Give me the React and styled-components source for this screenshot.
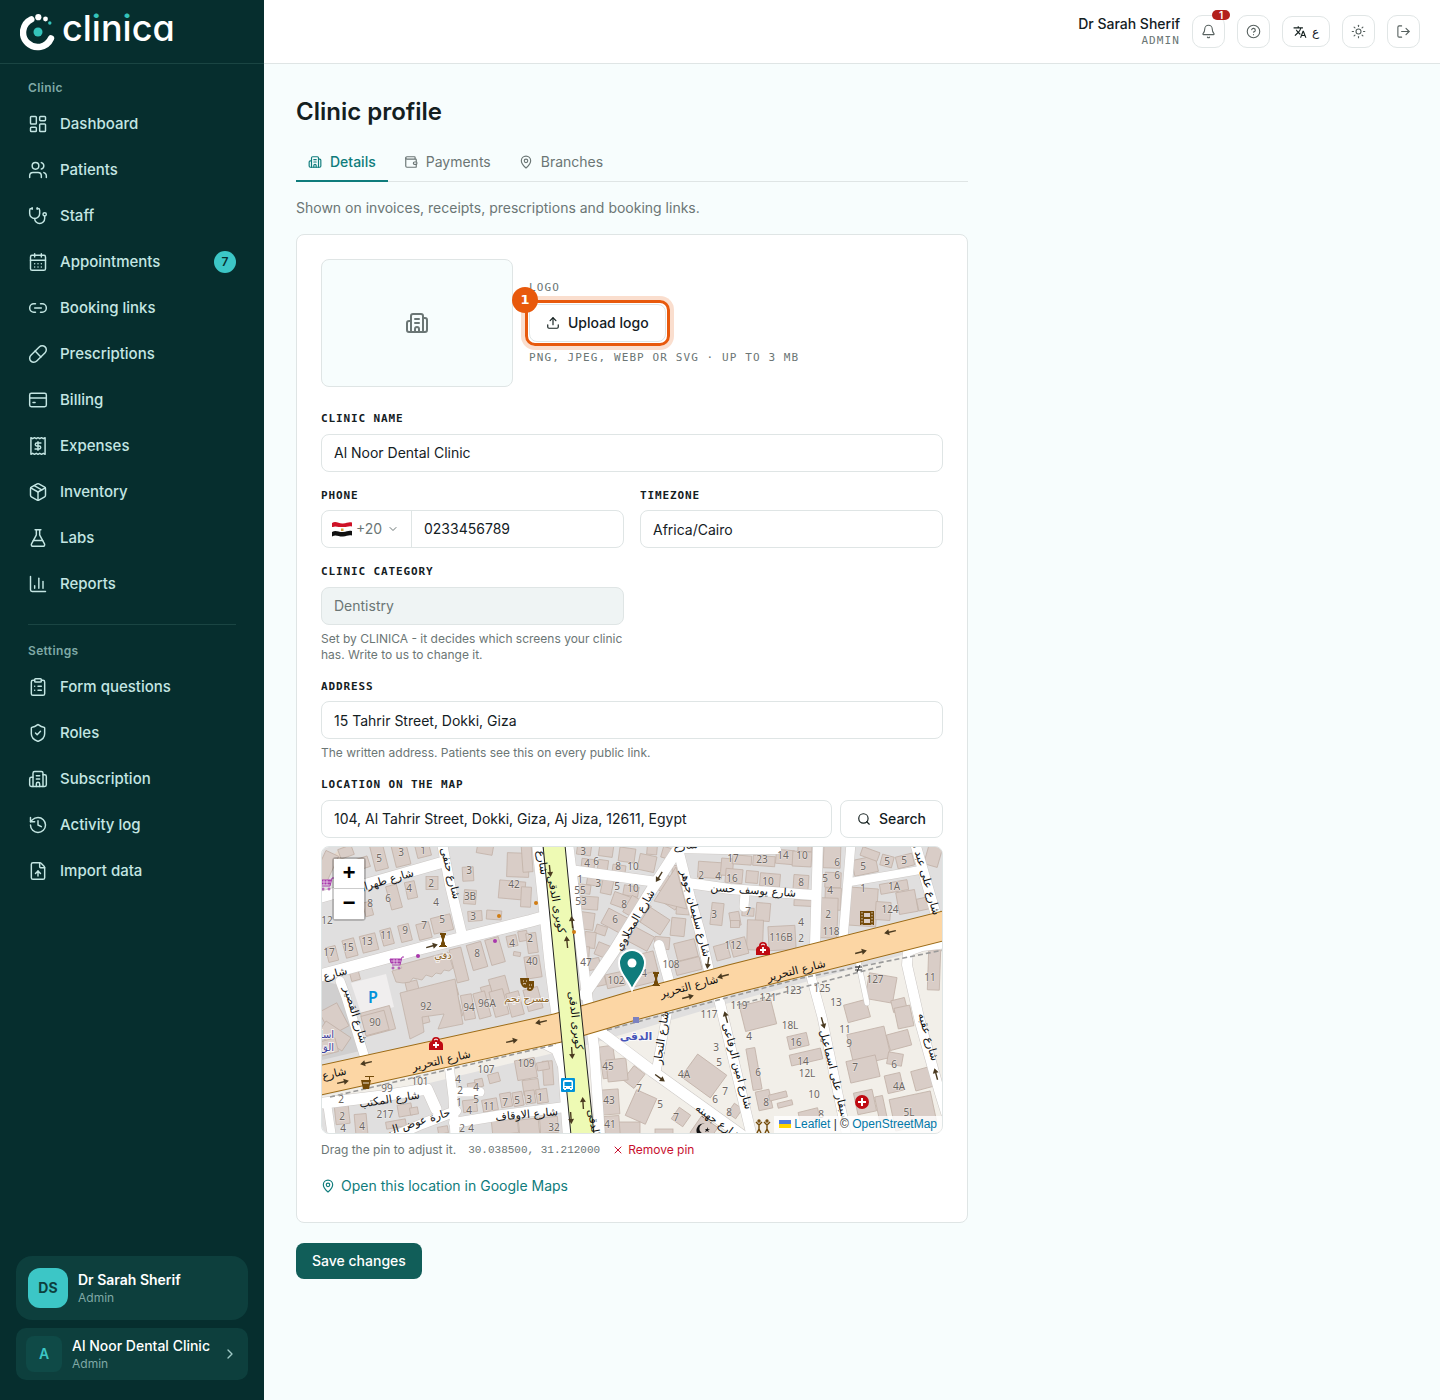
import { useState } from 'react'
import styled, { createGlobalStyle, css } from 'styled-components'
import {
    LayoutDashboard, Users, Stethoscope, CalendarDays, Link2, Pill, Package, FlaskConical,
    ChartColumn, ClipboardList, ShieldCheck, Building2, History, FileUp, Bell,
    CircleQuestionMark, Sun, LogOut, Wallet, MapPin, Upload, Search, ChevronDown, ChevronRight, X
} from 'lucide-react'
import { MdTranslate } from 'react-icons/md'

const Stroke = ({ size = 20, children }) => (
    <svg width={size} height={size} viewBox="0 0 24 24" fill="none" stroke="currentColor" strokeWidth="1.75" strokeLinecap="round" strokeLinejoin="round" aria-hidden="true">
        {children}
    </svg>
)

const CardIcon = () => (
    <Stroke>
        <rect x="2" y="4" width="20" height="16" rx="2" />
        <path d="M2 9.5h20M6 15h2.5" />
    </Stroke>
)

const ReceiptIcon = () => (
    <Stroke>
        <path d="M3.5 2v20l2.1-1.2L7.8 22l2.1-1.2L12 22l2.1-1.2 2.1 1.2 2.2-1.2 2.1 1.2V2l-2.1 1.2L16.2 2l-2.1 1.2L12 2 9.9 3.2 7.8 2 5.6 3.2z" />
        <path d="M15.5 8.5h-5a1.75 1.75 0 0 0 0 3.5h3a1.75 1.75 0 0 1 0 3.5h-5M12 6.8v10.4" />
    </Stroke>
)

const clinicLinks = [
    { label: 'Dashboard', icon: LayoutDashboard },
    { label: 'Patients', icon: Users },
    { label: 'Staff', icon: Stethoscope },
    { label: 'Appointments', icon: CalendarDays, count: 7 },
    { label: 'Booking links', icon: Link2 },
    { label: 'Prescriptions', icon: Pill },
    { label: 'Billing', icon: CardIcon },
    { label: 'Expenses', icon: ReceiptIcon },
    { label: 'Inventory', icon: Package },
    { label: 'Labs', icon: FlaskConical },
    { label: 'Reports', icon: ChartColumn }
]

const settingsLinks = [
    { label: 'Form questions', icon: ClipboardList },
    { label: 'Roles', icon: ShieldCheck },
    { label: 'Subscription', icon: Building2 },
    { label: 'Activity log', icon: History },
    { label: 'Import data', icon: FileUp }
]

const Logo = () => (
    <svg width="160" height="60" viewBox="0 -10 160 60" role="img" aria-label="clinica">
        <defs>
            <linearGradient id="dotted" gradientUnits="userSpaceOnUse" x1="0" y1="0" x2="0" y2="40">
                <stop offset="0.2" stopColor="#35c4bb" />
                <stop offset="0.2" stopColor="#fff" />
            </linearGradient>
        </defs>
        <path d="M11.3 7.3A14.6 14.6 0 1 0 31 26.4" fill="none" stroke="#fff" strokeWidth="6.4" strokeLinecap="round" />
        <circle cx="18" cy="20" r="4.5" fill="#35c4bb" />
        <circle cx="18.3" cy="5.2" r="3.1" fill="#fff" />
        <circle cx="25.5" cy="7" r="2.4" fill="#fff" />
        <circle cx="29.8" cy="11" r="1.7" fill="#35c4bb" />
        <LogoText x="42" y="29">
            cl<tspan fill="url(#dotted)">i</tspan>n<tspan fill="url(#dotted)">i</tspan>ca
        </LogoText>
    </svg>
)

const NavGroup = ({ title, links }) => (
    <Group>
        <GroupTitle>{title}</GroupTitle>
        <NavList>
            {links.map(({ label, icon: Icon, count }) => (
                <li key={label}>
                    <NavLink href="#">
                        <Icon size={20} strokeWidth={1.75} />
                        <span>{label}</span>
                        {count && <Count>{count}</Count>}
                    </NavLink>
                </li>
            ))}
        </NavList>
    </Group>
)

const SideBar = () => (
    <Side>
        <Brand href="#"><Logo /></Brand>
        <Nav>
            <NavGroup title="Clinic" links={clinicLinks} />
            <Divider />
            <NavGroup title="Settings" links={settingsLinks} />
        </Nav>
        <SideFoot>
            <UserCard>
                <Avatar>DS</Avatar>
                <div>
                    <Strong $bold>Dr Sarah Sherif</Strong>
                    <Role>Admin</Role>
                </div>
            </UserCard>
            <ClinicSwitch type="button">
                <Initial>A</Initial>
                <div>
                    <Strong>Al Noor Dental Clinic</Strong>
                    <Role>Admin</Role>
                </div>
                <ChevronRight size={16} />
            </ClinicSwitch>
        </SideFoot>
    </Side>
)

const TopBar = () => (
    <Bar>
        <Who>
            <WhoName>Dr Sarah Sherif</WhoName>
            <Mono>ADMIN</Mono>
        </Who>
        <IconButton type="button" aria-label="Notifications">
            <Bell size={15} strokeWidth={1.75} />
            <Alert>1</Alert>
        </IconButton>
        <IconButton type="button" aria-label="Help"><CircleQuestionMark size={15} strokeWidth={1.75} /></IconButton>
        <LangButton type="button" aria-label="Switch language">
            <MdTranslate size={14} />
            <span lang="ar">ع</span>
        </LangButton>
        <IconButton type="button" aria-label="Theme"><Sun size={15} strokeWidth={1.75} /></IconButton>
        <IconButton type="button" aria-label="Log out"><LogOut size={15} strokeWidth={1.75} /></IconButton>
    </Bar>
)

/* ---- map ---- */

// polylines: [points, width]
const streets = [
    ['-4,51 118,16', 11],
    ['120,-4 128,38 140,88', 10],
    ['-4,129 100,101 208,74 226,69', 12],
    ['18,134 24,150 42,208', 9],
    ['215,-4 228,120 232,150 240,205 246,290', 10],
    ['246,-4 264,140 272,200 278,290', 10],
    ['248,23 335,35', 10],
    ['356,2 330,42 292,104 262,148', 11],
    ['356,2 368,50 378,85 387,124', 10],
    ['356,2 400,3 455,3', 8],
    ['366,36 408,42 491,48', 10],
    ['496,-4 493,98', 10],
    ['529,-4 521,92', 9],
    ['528,35 598,23', 8],
    ['593,-4 614,68', 10],
    ['423,46 422,60', 9],
    ['337,98 348,138', 10],
    ['487,122 500,170 525,290', 9],
    ['396,148 412,215 430,290', 10],
    ['346,162 334,225', 9],
    ['268,178 285,190 330,224 422,290', 11],
    ['536,114 545,156', 5],
    ['626,96 600,99 586,104 585,118 598,175 617,243 630,285', 10],
    ['127,218 131,250 133,290', 9],
    ['2,256 60,249 105,242 114,262', 11],
    ['5,256 10,290', 8],
    ['70,290 100,277 134,264', 10],
    ['132,276 180,268 243,260', 10],
    ['132,245 158,245', 9],
    ['222,197 234,203 240,218', 9]
]

// blocks: [cx, cy, width, height, angle]
const blocks = [
    [41, 16, 12, 11, -18], [57, 10, 13, 26, -14], [79, 8, 15, 22, -14], [101, 3, 14, 14, -14], [24, 5, 14, 10, -20],
    [146, 27, 11, 14, -3], [148, 50, 12, 14, 4], [196, 18, 22, 24, 2], [190, 43, 26, 18, 5], [163, 2, 16, 10, 10],
    [72, 50, 11, 24, -15], [89, 43, 10, 17, -12], [110, 36, 12, 13, 0], [46, 62, 8, 14, -15],
    [153, 69, 14, 10, -4], [172, 68, 15, 9, 4], [120, 77, 20, 16, -14], [102, 84, 13, 16, -14], [83, 86, 11, 17, -14],
    [65, 90, 11, 16, -15], [47, 96, 16, 17, -14], [28, 101, 12, 18, -15], [10, 107, 10, 15, -14], [4, 20, 14, 30, 25],
    [155, 109, 15, 26, -16], [173, 104, 14, 26, -16], [137, 118, 12, 34, -14], [190, 94, 10, 11, -12], [201, 89, 9, 10, -10],
    [210, 96, 10, 20, -8], [211, 120, 15, 22, -9], [195, 107, 7, 4, 10], [178, 143, 17, 26, -15], [165, 146, 10, 14, -15],
    [56, 174, 30, 24, -15], [53, 176, 24, 20, -15], [146, 160, 11, 25, -10], [160, 158, 12, 26, -15], [177, 156, 14, 26, -15],
    [193, 157, 13, 24, -15], [211, 152, 15, 22, -15], [113, 148, 46, 12, -15],
    [204, 50, 10, 20, 3], [205, 10, 10, 30, -4],
    [262, 3, 14, 10, 8], [284, 4, 14, 11, 8], [305, 8, 16, 14, 8], [325, 16, 17, 16, 12], [345, 6, 10, 11, 16], [330, 3, 10, 9, 5],
    [266, 17, 13, 10, 6], [281, 18, 10, 10, 8], [297, 22, 13, 8, 8], [272, 34, 14, 9, 8], [262, 42, 13, 9, 8], [267, 56, 18, 13, 4],
    [285, 40, 11, 14, 12], [309, 44, 15, 10, 10], [300, 54, 20, 13, 20], [293, 74, 23, 17, 28], [315, 62, 22, 19, 30],
    [333, 74, 24, 18, 33], [319, 92, 22, 16, 28], [265, 74, 14, 17, 8], [279, 83, 11, 9, 18], [268, 93, 11, 16, 6],
    [262, 108, 10, 17, 4], [280, 103, 12, 13, 22], [272, 117, 12, 11, -12], [277, 134, 13, 10, -12], [293, 133, 18, 14, -12],
    [324, 117, 20, 22, -14], [323, 132, 24, 10, -14], [346, 38, 14, 17, 25], [350, 54, 15, 12, 33], [354, 27, 8, 17, 2],
    [356, 80, 14, 18, 6], [364, 103, 21, 18, -14], [366, 119, 26, 13, -14], [361, 60, 13, 15, 4], [340, 96, 15, 12, 5],
    [388, 23, 24, 16, 4], [405, 20, 12, 17, 5], [420, 13, 19, 9, 4], [442, 14, 22, 10, 4], [463, 10, 18, 14, 5], [480, 12, 19, 15, 3],
    [412, 29, 17, 14, 5], [430, 30, 12, 12, 5], [448, 33, 20, 13, 5], [479, 35, 15, 14, 4],
    [395, 67, 12, 22, 6], [413, 72, 10, 14, -10], [426, 65, 12, 8, 3], [441, 65, 14, 18, 5], [413, 77, 9, 7, 0],
    [481, 56, 18, 6, 3], [433, 88, 16, 30, 2], [417, 100, 16, 17, -15], [460, 91, 27, 24, -3], [400, 105, 14, 15, -15],
    [510, 10, 17, 22, 2], [511, 33, 16, 15, 2], [511, 52, 16, 22, 2], [507, 71, 17, 40, 2], [483, 0, 14, 9, 2],
    [543, 19, 24, 16, -12], [548, 7, 18, 9, 20], [565, 14, 12, 11, 15], [583, 14, 17, 12, -14], [541, 60, 28, 38, 4],
    [572, 40, 28, 10, -10], [561, 64, 15, 18, 4], [585, 55, 19, 22, -10], [601, 57, 11, 12, -12], [612, 6, 14, 26, 16],
    [98, 161, 12, 32, -15], [92, 147, 12, 26, -14], [102, 150, 36, 15, -14], [130, 157, 15, 28, -15],
    [559, 141, 28, 26, 10], [612, 123, 12, 40, 2], [577, 158, 14, 12, -14], [535, 164, 23, 18, -15], [582, 170, 16, 21, -12],
    [436, 168, 32, 26, -14], [476, 194, 20, 13, -13], [484, 210, 32, 11, -13], [547, 199, 38, 32, -13], [541, 222, 30, 22, -13],
    [577, 193, 22, 16, -15], [573, 212, 15, 12, 10], [572, 236, 16, 18, -13], [600, 232, 18, 20, -15], [591, 264, 42, 32, -12],
    [543, 255, 19, 22, -12], [559, 261, 8, 24, -12], [432, 222, 9, 42, -10], [442, 253, 14, 19, -12], [456, 249, 18, 6, -14], [463, 257, 15, 5, -14],
    [382, 229, 36, 28, 36], [413, 264, 10, 12, 35], [359, 270, 14, 14, 35], [319, 260, 22, 28, 24], [312, 230, 14, 18, 38], [307, 282, 22, 14, 0],
    [487, 268, 20, 10, -14], [382, 283, 20, 20, 35], [342, 285, 18, 6, 0],
    [286, 215, 14, 32, -8], [295, 223, 20, 22, -6], [288, 255, 18, 25, -4], [290, 278, 15, 18, -4],
    [204, 222, 20, 20, -10], [209, 240, 16, 15, -8], [226, 226, 10, 24, -4], [221, 219, 12, 8, -10], [172, 231, 11, 9, -15],
    [157, 236, 8, 8, -12], [150, 241, 8, 10, -10], [148, 259, 14, 12, -6], [168, 258, 15, 12, -10], [184, 253, 11, 14, -10],
    [196, 252, 10, 14, -10], [208, 250, 10, 13, -8], [220, 249, 11, 14, -8], [183, 280, 26, 14, -6], [207, 280, 20, 16, -6], [227, 278, 18, 16, -4],
    [83, 263, 14, 12, -10], [74, 277, 20, 7, -10], [20, 266, 14, 22, -6], [39, 277, 12, 20, -5], [92, 264, 8, 7, -10], [121, 283, 10, 7, -10],
    [12, 172, 20, 26, -28], [12, 189, 30, 16, 34], [6, 200, 18, 14, -15], [33, 129, 9, 9, -15]
]

// text centre, text, angle
const streetNames = [
    [64, 37, 'شارع طهران', -16], [125, 27, 'شارع حنفى', 76], [14, 130, 'شارع', -15], [30, 169, 'شارع القصير', 73],
    [217, 16, 'شارع', 82], [231, 58, 'كوبرى الدقى', 79], [250, 174, 'كوبرى الدقى', 83], [268, 276, 'الدقى', 80],
    [316, 75, 'شارع المحلاوي', -60], [370, 67, 'شارع سليمان جوهر', 75], [368, 143, 'شارع التحرير', -15],
    [475, 127, 'شارع التحرير', -14], [120, 217, 'شارع التحرير', -13], [13, 230, 'شارع', -13], [431, 47, 'شارع يوسف حسن', 4],
    [600, 30, 'شارع على عبد ال', 74], [364, 2, 'شارع', -5], [343, 191, 'شارع النجار', -82], [412, 220, 'شارع امين الرفاعى', 75],
    [509, 229, 'سبقار على اسماعيل', 76], [603, 191, 'شارع عقبه', 74], [394, 278, 'شارع جهينه', 36],
    [68, 256, 'شارع المكتب', -9], [98, 278, 'حارة عوض ال', -17], [205, 271, 'شارع الاوقاف', -5]
]

const houseNumbers = [
    [57, 11, '5'], [79, 5, '3'], [101, 3, '1'], [147, 23, '3'], [148, 49, '3B'], [192, 37, '42'], [87, 41, '4'], [109, 36, '2'],
    [48, 56, '8'], [66, 51, '6'], [114, 55, '4'], [5, 73, '12'], [151, 69, '3'], [120, 72, '5'], [102, 78, '7'], [83, 83, '9'],
    [64, 88, '11'], [45, 94, '13'], [26, 100, '15'], [7, 105, '17'], [155, 106, '8'], [190, 96, '4'],
    [261, 4, '3'], [265, 16, '4'], [274, 14, '6'], [296, 19, '8'], [311, 19, '10'], [258, 32, '1'], [258, 43, '55'], [259, 54, '53'],
    [276, 36, '3'], [295, 39, '5'], [311, 41, '10'], [302, 57, '8'], [293, 72, '6'], [208, 91, '2'], [210, 114, '40'], [264, 115, '47'],
    [294, 133, '102'], [322, 126, '4'], [349, 117, '108'], [379, 28, '2'], [396, 29, '4'], [392, 67, '3'], [411, 98, '112'],
    [411, 11, '17'], [440, 12, '23'], [461, 8, '14'], [480, 8, '10'], [515, 15, '6'], [541, 19, '5'], [565, 14, '5'], [582, 13, '5'],
    [410, 31, '16'], [446, 34, '10'], [479, 35, '8'], [503, 31, '5'], [515, 28, '6'], [508, 43, '4'], [541, 41, '1'], [572, 39, '1A'],
    [426, 64, '7'], [506, 67, '2'], [568, 62, '124'], [479, 75, '4'], [509, 84, '118'], [459, 90, '116B'], [479, 91, '2'],
    [471, 143, '123'], [500, 141, '125'], [553, 132, '127'], [608, 130, '11'], [104, 159, '92'], [147, 160, '94'], [165, 156, '96A'],
    [53, 175, '90'], [286, 219, '45'], [164, 222, '107'], [204, 216, '109'], [98, 234, '101'], [65, 241, '99'], [19, 252, '2'],
    [136, 232, '4'], [138, 243, '2'], [154, 240, '4'], [137, 255, '1'], [154, 252, '5'], [147, 263, '4'], [167, 259, '11'],
    [183, 255, '7'], [195, 253, '5'], [207, 252, '3'], [218, 250, '1'], [287, 253, '43'], [288, 277, '41'], [63, 267, '217'],
    [20, 269, '2'], [21, 281, '4'], [40, 279, '4'], [140, 281, '2'], [149, 281, '4'], [232, 280, '32'],
    [417, 158, '119'], [446, 150, '121'], [387, 167, '117'], [468, 178, '18L'], [427, 189, '4'], [474, 195, '16'], [394, 200, '3'],
    [397, 215, '5'], [481, 214, '14'], [485, 226, '12L'], [514, 155, '13'], [523, 182, '11'], [527, 196, '9'], [533, 220, '7'],
    [436, 225, '6'], [362, 227, '4A'], [317, 241, '7'], [403, 244, '7'], [393, 252, '6'], [338, 257, '5'], [444, 255, '8'],
    [492, 247, '10'], [354, 270, '7'], [407, 265, '8'], [572, 217, '6'], [577, 239, '4A'], [587, 265, '5L'], [499, 267, '8']
]

// one-way arrows: [x, y, angle]
const arrows = [
    [110, 99, -15], [228, 24, 84], [245, 95, -96], [337, 30, 122], [386, 116, 98], [401, 129, 166], [366, 150, -14],
    [568, 85, 167], [539, 105, -14], [44, 216, 167], [21, 235, -13], [219, 175, 167], [190, 194, -13], [250, 206, 86],
    [261, 256, -94], [249, 271, 86], [338, 231, 36], [404, 170, -105], [501, 176, 74], [614, 227, -105], [250, 75, -96]
]

const pois = [
    [177, 69, '#d07c14'], [173, 94, '#a838ac'], [96, 109, '#a838ac'], [214, 56, '#d07c14'], [252, 85, '#d07c14']
]

const Cart = ({ x, y }) => (
    <g transform={`translate(${x} ${y})`} fill="none" stroke="#a838ac">
        <path d="M7-6H5L3 2h-8" />
        <path d="M-7-4H4L3 0h-9z" fill="#a838ac" />
        <path d="M-6-2H4M-3-4v5M0-4v5" stroke="#fff" strokeWidth="0.6" />
        <circle cx="-4" cy="5" r="1" />
        <circle cx="2" cy="5" r="1" />
    </g>
)

const Pharmacy = ({ x, y }) => (
    <g transform={`translate(${x} ${y})`}>
        <path d="M-7 6v-5q0-3 3-4 0-4 4-4t4 4q3 1 3 4v5z" fill="#bf0a12" />
        <path d="M0-2v6M-3 1h6" stroke="#fff" strokeWidth="1.8" />
        <path d="M-2-4q2-2 4 0" stroke="#fff" fill="none" />
    </g>
)

const Hourglass = ({ x, y }) => (
    <path transform={`translate(${x} ${y})`} d="M-3-7h6v2h-1v2L1-1v2l1 2v2h1v1h1v1h-8V6h1V5h1V3l1-2v-2l-1-2v-2h-1z" fill="#734a08" />
)

const MapView = () => (
    <MapSvg viewBox="0 0 620 286" preserveAspectRatio="xMidYMid slice" role="img" aria-label="Map of Dokki, Giza">
        <rect width="620" height="286" fill="#e0dfdf" />
        <path d="M258 200L400 158 620 97V286H262zM0 249L232 196V206L0 262z" fill="#f2efe9" />
        <path d="M0 134L18 138 38 204 0 213z" fill="#d0cfcf" />
        <path d="M29 136L64 127 72 160 40 169z" fill="#f0eeee" />
        <path d="M0 18L20 0H27L0 38z" fill="#e6d9cd" />
        <g fill="#d9cdc7" stroke="#c2b2a8" strokeWidth="0.8">
            {blocks.map(([x, y, w, h, a], i) => (
                <rect key={i} x={-w / 2} y={-h / 2} width={w} height={h} transform={`translate(${x} ${y}) rotate(${a})`} />
            ))}
            <path d="M70 124L80 121 78 118 126 105 131 121 127 124 122 123 119 127 114 126 110 130 104 128 100 133 91 131 88 135 81 136 74 135z" />
            <path d="M78 146L133 132 141 177 116 182 122 167 100 170 102 185 88 192z" />
            <path d="M354 20L365 62 332 54z" />
        </g>
        <g fill="none" strokeLinejoin="round" strokeLinecap="round">
            {streets.map(([points, w]) => <polyline key={points} points={points} stroke="#cdc9c6" strokeWidth={w + 1} />)}
            {streets.map(([points, w]) => <polyline key={points} points={points} stroke="#fff" strokeWidth={w} />)}
        </g>
        <g fill="none" stroke="#9a9a9a" strokeWidth="1.6" strokeDasharray="5 3">
            <path d="M8 250L232 198M285 183L400 152 480 131 622 103M415 158L560 119" />
        </g>
        <path d="M-5 234L236 181 310 159 410 132 625 78" fill="none" stroke="#9c6b16" strokeWidth="30" />
        <path d="M-5 234L236 181 310 159 410 132 625 78" fill="none" stroke="#fcd6a4" strokeWidth="28" />
        <path d="M221-2L235 143 249 288H272L257 143 243-2z" fill="#eefab4" stroke="#222" />

        <g fill="#4a3a20">
            {arrows.map(([x, y, a], i) => (
                <path key={i} d="M-6-.7H1V-3L6 0 1 3V.7H-6z" transform={`translate(${x} ${y}) rotate(${a})`} />
            ))}
        </g>
        <Houses>
            {houseNumbers.map(([x, y, n], i) => <text key={i} x={x} y={y + 4}>{n}</text>)}
        </Houses>
        <Names>
            {streetNames.map(([x, y, name, a], i) => (
                <text key={i} transform={`translate(${x} ${y}) rotate(${a})`}>{name}</text>
            ))}
        </Names>
        <PlaceName x="205" y="155" $color="#8d6528">مسرح نجم</PlaceName>
        <PlaceName x="121" y="112" $color="#8d6528">دقي</PlaceName>
        <PlaceName x="5" y="191" $color="#3b3f9e">اسا</PlaceName>
        <PlaceName x="5" y="204" $color="#3b3f9e">الق</PlaceName>
        <PlaceName x="314" y="193" $color="#4754b8" $big>الدقى</PlaceName>

        {pois.map(([x, y, c]) => <circle key={x} cx={x} cy={y} r="2" fill={c} />)}
        <Cart x={75} y={116} />
        <Cart x={5} y={37} />
        <Parking x="51" y="156">P</Parking>
        <Pharmacy x={441} y={102} />
        <Pharmacy x={114} y={197} />
        <circle cx="540" cy="255" r="7" fill="#bf0a12" />
        <path d="M540 251v8M536 255h8" stroke="#fff" strokeWidth="2" />
        <rect x="311" y="170" width="6" height="6" fill="#7a80c0" />
        <g transform="translate(246 238)">
            <rect x="-7" y="-7" width="14" height="14" rx="1" fill="#0092da" />
            <path d="M-5 4V-3q0-2 2-2h6q2 0 2 2v7h-1v1H2V4h-4v1h-2V4z" fill="#fff" />
            <path d="M-3.500-3h7v4h-7zM-3.500 2h1.500v1h-1.500zM2 2h1.500v1H2z" fill="#0092da" />
        </g>
        <g transform="translate(545 71)">
            <path d="M-7-7H7V7H-7z" fill="#734a08" />
            <path d="M-3-5h6v4h-6zM-3 1h6v4h-6z" fill="#dccfc6" />
            <path d="M-5-6V7M5-6V7" stroke="#dccfc6" strokeDasharray="1.5 1.5" />
        </g>
        <Hourglass x={121} y={93} />
        <Hourglass x={334} y={132} />
        <g fill="#734a08">
            <path d="M39 233h10l-2 9h-6zM43 229h9v1h-4v3h-1v-3h-4z" />
            <path d="M198 131h9v8q-4 4-7 0-2-3-2-8zM206 134h6v6q-2 6-7 3z" />
        </g>
        <path d="M41 236h6M201 134h1M204 134h1M201 137q2-1 3 0M207 138h1M209 138h1M207 141q1 1 2 0" stroke="#eee0d0" fill="none" />
        <path d="M384 277a7 7 0 1 0 4 9h-3a5 5 0 1 1-1-9zM385 280l1 2h2l-2 1 1 2-2-1-2 1 1-2-1-1h2z" fill="#111" />
        <g fill="none" stroke="#734a08" strokeWidth="1.4">
            <path d="M434 275l3 3v4l-2 4M437 282l2 4M440 275l-3 3M442 275l3 3v4l-2 4M445 282l2 4M448 275l-3 3" />
            <circle cx="437" cy="274" r="1" />
            <circle cx="445" cy="274" r="1" />
        </g>
        <path d="M533 120h7M533 123h7M538 118l-3 7" stroke="#333" />
        <path d="M310 143C306 132 297 127 297 116a13 13 0 0 1 26 0C323 127 314 132 310 143z" fill="#0f7c7c" stroke="#fff" strokeWidth="2" />
        <circle cx="310" cy="116" r="4.5" fill="#fff" />
    </MapSvg>
)

const Flag = () => (
    <svg width="20" height="16" viewBox="0 0 20 16" aria-hidden="true">
        <path d="M0 2C4-.5 7 3 11 2.500s6-2 9-1V6H0z" fill="#ce1126" />
        <path d="M0 6.500C4 4 7 7 11 6.500s6-2 9-1V11H0z" fill="#fff" />
        <path d="M0 11C4 8.500 7 11.500 11 11s6-2 9-1v4.500c-3-1-5 .5-9 1S4 13 0 15.500z" fill="#111" />
        <path d="M9 7.500h2.500v2.500H9z" fill="#d7a440" />
    </svg>
)

const tabs = [
    { label: 'Details', icon: Building2 },
    { label: 'Payments', icon: Wallet },
    { label: 'Branches', icon: MapPin }
]

const ProfileForm = () => (
    <form onSubmit={(e) => e.preventDefault()}>
        <Card>
            <LogoRow>
                <LogoBox><Building2 size={24} /></LogoBox>
                <LogoSide>
                    <Mono>LOGO</Mono>
                    <Callout>
                        <Outlined type="button"><Upload size={14} />Upload logo</Outlined>
                        <Step>1</Step>
                    </Callout>
                    <Mono>PNG, JPEG, WEBP OR SVG · UP TO 3 MB</Mono>
                </LogoSide>
            </LogoRow>
            <Fields>
                <Field>
                    <Label htmlFor="name">CLINIC NAME</Label>
                    <Input id="name" defaultValue="Al Noor Dental Clinic" />
                </Field>
                <Columns>
                    <Field>
                        <Label htmlFor="phone">PHONE</Label>
                        <PhoneBox>
                            <Prefix>
                                <Flag />
                                <select aria-label="Country code" defaultValue="+20">
                                    <option>+20</option>
                                </select>
                                <ChevronDown size={12} />
                            </Prefix>
                            <input id="phone" type="tel" defaultValue="0233456789" />
                        </PhoneBox>
                    </Field>
                    <Field>
                        <Label htmlFor="timezone">TIMEZONE</Label>
                        <Input id="timezone" defaultValue="Africa/Cairo" />
                    </Field>
                    <Field>
                        <Label htmlFor="category">CLINIC CATEGORY</Label>
                        <Input id="category" defaultValue="Dentistry" disabled />
                        <Hint>Set by CLINICA - it decides which screens your clinic has. Write to us to change it.</Hint>
                    </Field>
                </Columns>
                <Field>
                    <Label htmlFor="address">ADDRESS</Label>
                    <Input id="address" defaultValue="15 Tahrir Street, Dokki, Giza" />
                    <Hint>The written address. Patients see this on every public link.</Hint>
                </Field>
                <div>
                    <Field>
                        <Label htmlFor="location">LOCATION ON THE MAP</Label>
                        <SearchRow>
                            <Input id="location" defaultValue="104, Al Tahrir Street, Dokki, Giza, Aj Jiza, 12611, Egypt" />
                            <Outlined type="button"><Search size={14} />Search</Outlined>
                        </SearchRow>
                    </Field>
                    <MapFrame>
                        <MapView />
                        <Zoom>
                            <button type="button" aria-label="Zoom in">+</button>
                            <button type="button" aria-label="Zoom out">−</button>
                        </Zoom>
                        <Credit>
                            <a href="#">
                                <svg width="12" height="8" viewBox="0 0 12 8" aria-hidden="true">
                                    <path fill="#4C7BE1" d="M0 0h12v4H0z" />
                                    <path fill="#FFD500" d="M0 4h12v4H0z" />
                                </svg>
                                {' '}Leaflet
                            </a>
                            {' | © '}
                            <a href="#">OpenStreetMap</a>
                        </Credit>
                    </MapFrame>
                    <PinRow>
                        <Hint>Drag the pin to adjust it.</Hint>
                        <Coords>30.038500, 31.212000</Coords>
                        <Remove type="button"><X size={12} />Remove pin</Remove>
                    </PinRow>
                </div>
                <MapLink href="#"><MapPin size={14} />Open this location in Google Maps</MapLink>
            </Fields>
        </Card>
        <Save type="submit">Save changes</Save>
    </form>
)

const App = () => {
    const [tab, setTab] = useState('Details')
    return (
        <Shell>
            <GlobalStyle />
            <SideBar />
            <Page>
                <TopBar />
                <Content>
                    <h1>Clinic profile</h1>
                    <Tabs role="tablist">
                        {tabs.map(({ label, icon: Icon }) => (
                            <Tab key={label} type="button" role="tab" aria-selected={tab === label} $active={tab === label} onClick={() => setTab(label)}>
                                <Icon size={14} />{label}
                            </Tab>
                        ))}
                    </Tabs>
                    <Intro>Shown on invoices, receipts, prescriptions and booking links.</Intro>
                    <ProfileForm />
                </Content>
            </Page>
        </Shell>
    )
}

const GlobalStyle = createGlobalStyle`
    *{
        box-sizing: border-box;
    }
    body{
        margin: 0;
        background: #f7fdfd;
        color: #14201f;
        font-family: Inter, "Noto Sans", sans-serif;
        font-size: 14px;
        line-height: 20px;
    }
    h1, h2, p, ul{
        margin: 0;
        padding: 0;
    }
    button, input, select{
        font: inherit;
        color: inherit;
    }
    button{
        cursor: pointer;
    }
    a{
        text-decoration: none;
    }
    svg{
        flex-shrink: 0;
    }
`

const Shell = styled.div`
    display: grid;
    grid-template-columns: 264px 1fr;
    min-height: 100vh;
`

const Side = styled.aside`
    display: flex;
    flex-direction: column;
    background: #062e2e;
    color: #c4e6e3;
`

const Brand = styled.a`
    display: flex;
    align-items: center;
    height: 64px;
    padding: 0 20px;
    border-bottom: 1px solid #1a4543;
`

const LogoText = styled.text`
    font-family: Inter, sans-serif;
    font-size: 36px;
    font-weight: 500;
    font-feature-settings: "cv11";
    fill: #fff;
`

const Nav = styled.nav`
    flex: 1;
    padding: 16px;
`

const Group = styled.div`
    display: flex;
    flex-direction: column;
    gap: 6px;
`

const GroupTitle = styled.h2`
    padding: 0 12px;
    font-size: 12px;
    line-height: 16px;
    font-weight: 600;
    letter-spacing: 0.03em;
    color: #7fa9a6;
`

const NavList = styled.ul`
    display: flex;
    flex-direction: column;
    gap: 2px;
    list-style: none;
`

const NavLink = styled.a`
    display: flex;
    align-items: center;
    gap: 12px;
    height: 44px;
    padding: 0 12px;
    font-size: 15px;
    font-weight: 500;
    color: inherit;
`

const Count = styled.span`
    display: grid;
    place-items: center;
    width: 22px;
    height: 22px;
    margin-left: auto;
    border-radius: 50%;
    background: #3cc6c6;
    color: #062e2e;
    font-size: 12px;
    font-weight: 600;
`

const Divider = styled.hr`
    height: 1px;
    margin: 18px 12px;
    border: 0;
    background: #1a4543;
`

const SideFoot = styled.div`
    display: flex;
    flex-direction: column;
    gap: 8px;
    padding: 0 16px 20px;
`

const UserCard = styled.div`
    display: flex;
    align-items: center;
    gap: 10px;
    height: 64px;
    padding: 12px;
    border-radius: 16px;
    background: #0d3f3d;
`

const ClinicSwitch = styled.button`
    display: flex;
    align-items: center;
    gap: 10px;
    height: 52px;
    padding: 0 10px;
    border: 0;
    border-radius: 10px;
    background: #0d3f3d;
    color: #9fc9c6;
    text-align: left;
    svg{
        margin-left: auto;
    }
`

const Avatar = styled.span`
    display: grid;
    place-items: center;
    width: 40px;
    height: 40px;
    border-radius: 12px;
    background: #3cc6c6;
    color: #0d3f3d;
    font-weight: 700;
`

const Initial = styled(Avatar)`
    width: 36px;
    height: 36px;
    border-radius: 8px;
    background: #0f4a47;
    color: #3cc6c6;
    font-weight: 600;
`

const Strong = styled.div`
    line-height: 20px;
    font-weight: ${({ $bold }) => ($bold ? 600 : 500)};
    color: #fff;
`

const Role = styled.div`
    font-size: 12px;
    line-height: 16px;
    color: #7fa9a6;
`

const Page = styled.div`
    min-width: 0;
`

const Bar = styled.header`
    display: flex;
    align-items: center;
    justify-content: flex-end;
    gap: 12px;
    height: 64px;
    padding: 0 20px;
    border-bottom: 1px solid #dfe5e5;
    background: #fff;
`

const Who = styled.div`
    display: flex;
    flex-direction: column;
    align-items: flex-end;
`

const WhoName = styled.div`
    line-height: 18px;
    font-weight: 500;
`

const Mono = styled.span`
    font-family: "DejaVu Sans Mono", monospace;
    font-size: 11px;
    line-height: 16px;
    letter-spacing: 0.1em;
    color: #6b7675;
`

const IconButton = styled.button`
    position: relative;
    display: flex;
    align-items: center;
    padding: 8px;
    border: 1px solid #e1e6e6;
    border-radius: 10px;
    background: #fff;
    color: #57615f;
`

const LangButton = styled(IconButton)`
    gap: 5px;
    height: 31px;
    padding: 0 10px;
    color: #14201f;
    font-size: 12px;
`

const Alert = styled.span`
    position: absolute;
    top: -6px;
    right: -6px;
    width: 18px;
    border-radius: 5px;
    background: #b3201c;
    color: #fff;
    font-size: 10px;
    font-weight: 600;
    line-height: 10px;
`

const Content = styled.main`
    max-width: 736px;
    padding: 32px;
    h1{
        margin-bottom: 16px;
        font-size: 24px;
        line-height: 32px;
        font-weight: 600;
    }
`

const Tabs = styled.div`
    display: flex;
    gap: 4px;
    border-bottom: 1px solid #dfe5e5;
`

const Tab = styled.button`
    display: flex;
    align-items: center;
    gap: 8px;
    margin-bottom: -1px;
    padding: 8px 12px;
    border: 0;
    border-bottom: 2px solid transparent;
    background: none;
    color: #6b7675;
    ${({ $active }) => $active && css`
        border-color: #0f7c7c;
        color: #0f7c7c;
        font-weight: 500;
    `}
`

const Intro = styled.p`
    padding: 16px 0;
    color: #6b7675;
`

const Card = styled.section`
    display: flex;
    flex-direction: column;
    gap: 24px;
    padding: 24px;
    border: 1px solid #dfe5e5;
    border-radius: 8px;
    background: #fff;
`

const LogoRow = styled.div`
    display: flex;
    align-items: center;
    gap: 16px;
`

const LogoBox = styled.div`
    display: grid;
    place-items: center;
    width: 192px;
    height: 128px;
    border: 1px solid #dfe5e5;
    border-radius: 8px;
    background: #f7fdfd;
    color: #6b7675;
`

const LogoSide = styled.div`
    display: flex;
    flex-direction: column;
    align-items: flex-start;
    gap: 8px;
`

const Outlined = styled.button`
    display: flex;
    align-items: center;
    gap: 8px;
    height: 38px;
    padding: 0 16px;
    border: 1px solid #dfe5e5;
    border-radius: 8px;
    background: #fff;
    font-weight: 500;
`

const Callout = styled.div`
    position: relative;
    &::after{
        content: "";
        position: absolute;
        inset: -4px;
        border: 3px solid #e8590c;
        border-radius: 10px;
        box-shadow: 0 0 0 4px rgba(232, 89, 12, 0.2);
        pointer-events: none;
    }
`

const Step = styled.span`
    position: absolute;
    z-index: 1;
    top: -17px;
    left: -17px;
    width: 26px;
    height: 26px;
    border-radius: 50%;
    background: #e8590c;
    color: #fff;
    font-family: "DejaVu Sans", sans-serif;
    font-size: 13px;
    font-weight: 700;
    line-height: 26px;
    text-align: center;
`

const Fields = styled.div`
    display: flex;
    flex-direction: column;
    gap: 16px;
`

const Columns = styled.div`
    display: grid;
    grid-template-columns: 1fr 1fr;
    gap: 16px;
`

const Field = styled.div`
    display: flex;
    flex-direction: column;
    gap: 6px;
    min-width: 0;
`

const Label = styled.label`
    font-family: "DejaVu Sans Mono", monospace;
    font-size: 11px;
    line-height: 1.5;
    font-weight: 700;
    letter-spacing: 0.08em;
`

const Input = styled.input`
    width: 100%;
    height: 38px;
    padding: 0 12px;
    border: 1px solid #dfe5e5;
    border-radius: 8px;
    background: #fff;
    &:disabled{
        background: #eff4f4;
        color: #6b7675;
    }
`

const PhoneBox = styled.div`
    display: flex;
    height: 38px;
    border: 1px solid #dfe5e5;
    border-radius: 8px;
    input{
        flex: 1;
        min-width: 0;
        padding: 0 12px;
        border: 0;
        background: none;
    }
`

const Prefix = styled.div`
    display: flex;
    align-items: center;
    gap: 4px;
    padding: 0 12px 0 10px;
    border-right: 1px solid #dfe5e5;
    color: #6b7675;
    select{
        appearance: none;
        padding: 0;
        border: 0;
        background: none;
    }
`

const Hint = styled.p`
    font-size: 12px;
    line-height: 16px;
    color: #6b7675;
`

const SearchRow = styled.div`
    display: flex;
    gap: 8px;
`

const MapFrame = styled.div`
    position: relative;
    height: 288px;
    margin: 8px 0;
    overflow: hidden;
    border: 1px solid #dfe5e5;
    border-radius: 8px;
`

const MapSvg = styled.svg`
    display: block;
    width: 100%;
    height: 100%;
    font-family: "Noto Sans", "DejaVu Sans", sans-serif;
    text-anchor: middle;
`

const Houses = styled.g`
    font-size: 10px;
    fill: #6d6662;
    paint-order: stroke;
    stroke: rgba(255, 255, 255, 0.5);
    stroke-width: 1px;
`

const Names = styled.g`
    font-family: "DejaVu Sans", sans-serif;
    font-size: 11px;
    fill: #111;
`

const PlaceName = styled.text`
    font-family: "DejaVu Sans", sans-serif;
    font-size: ${({ $big }) => ($big ? 11 : 10)}px;
    font-weight: ${({ $big }) => ($big ? 700 : 400)};
    fill: ${({ $color }) => $color};
    paint-order: stroke;
    stroke: rgba(255, 255, 255, 0.7);
    stroke-width: 2px;
`

const Parking = styled.text`
    font-size: 16px;
    font-weight: 600;
    fill: #0092da;
`

const Zoom = styled.div`
    position: absolute;
    top: 10px;
    left: 10px;
    border: 2px solid rgba(0, 0, 0, 0.2);
    border-radius: 4px;
    background-clip: padding-box;
    button{
        display: block;
        width: 30px;
        height: 30px;
        padding: 3px 0 0;
        border: 0;
        background: #fff;
        color: #000;
        font: bold 22px/26px "Liberation Mono", monospace;
    }
    button:first-child{
        border-bottom: 1px solid #ccc;
    }
`

const Credit = styled.div`
    position: absolute;
    right: 0;
    bottom: 0;
    padding: 0 5px;
    background: rgba(255, 255, 255, 0.8);
    color: #333;
    font: 12px/17px "Liberation Sans", sans-serif;
    a{
        color: #0078a8;
    }
`

const PinRow = styled.div`
    display: flex;
    align-items: center;
    gap: 12px;
`

const Coords = styled.span`
    font-family: "Liberation Mono", monospace;
    font-size: 11px;
    line-height: 16px;
    color: #6b7675;
`

const Remove = styled.button`
    display: flex;
    align-items: center;
    gap: 4px;
    padding: 0;
    border: 0;
    background: none;
    color: #c8102e;
    font-size: 12px;
    line-height: 16px;
`

const MapLink = styled.a`
    display: flex;
    align-items: center;
    gap: 6px;
    height: 24px;
    color: #0f7c7c;
`

const Save = styled.button`
    height: 36px;
    margin-top: 20px;
    padding: 0 16px;
    border: 0;
    border-radius: 8px;
    background: #115e59;
    color: #fff;
    font-weight: 500;
`

export default App
